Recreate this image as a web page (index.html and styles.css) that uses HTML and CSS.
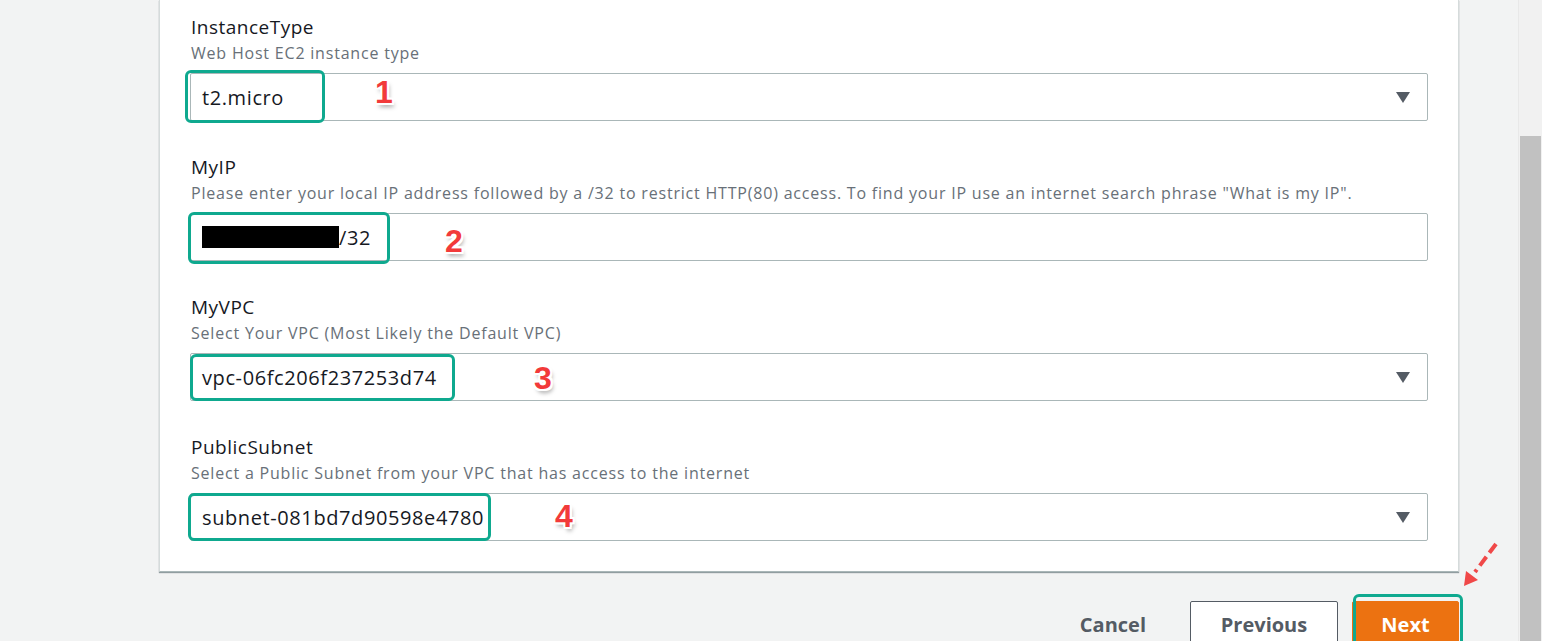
FILE: index.html
```html
<!DOCTYPE html>
<html>
<head>
<meta charset="utf-8">
<link rel="stylesheet" href="styles.css">
</head>
<body>
<div class="page">
  <div class="main">
    <div class="card">
      <div class="group">
        <div class="label">InstanceType</div>
        <div class="desc">Web Host EC2 instance type</div>
        <div class="field select">
          <span class="value">t2.micro</span>
          <span class="hl hl1"></span>
          <span class="num n1">1</span>
          <span class="caret"></span>
        </div>
      </div>
      <div class="group">
        <div class="label">MyIP</div>
        <div class="desc">Please enter your local IP address followed by a /32 to restrict HTTP(80) access. To find your IP use an internet search phrase "What is my IP".</div>
        <div class="field">
          <span class="value"><span class="redact"></span>/32</span>
          <span class="hl hl2"></span>
          <span class="num n2">2</span>
        </div>
      </div>
      <div class="group">
        <div class="label">MyVPC</div>
        <div class="desc">Select Your VPC (Most Likely the Default VPC)</div>
        <div class="field select">
          <span class="value">vpc-06fc206f237253d74</span>
          <span class="hl hl3"></span>
          <span class="num n3">3</span>
          <span class="caret"></span>
        </div>
      </div>
      <div class="group">
        <div class="label">PublicSubnet</div>
        <div class="desc">Select a Public Subnet from your VPC that has access to the internet</div>
        <div class="field select">
          <span class="value">subnet-081bd7d90598e4780</span>
          <span class="hl hl4"></span>
          <span class="num n4">4</span>
          <span class="caret"></span>
        </div>
      </div>
    </div>
    <div class="actions">
      <button class="btn link">Cancel</button>
      <button class="btn normal">Previous</button>
      <div class="next-wrap">
        <button class="btn primary">Next</button>
        <span class="hl hl5"></span>
        <svg class="arrow" width="50" height="60" viewBox="0 0 50 60">
          <line x1="38" y1="3" x2="17" y2="31" stroke="#f04848" stroke-width="4" stroke-dasharray="11 5" stroke-linecap="butt"/>
          <polygon points="6,45 8,30 20,39" fill="#f04848"/>
        </svg>
      </div>
    </div>
  </div>
  <div class="scrollbar"><div class="thumb"></div></div>
</div>
</body>
</html>
```
FILE: styles.css
```css
html, body {
  margin: 0;
  padding: 0;
}
body {
  background: #f2f3f3;
  font-family: "Open Sans", "Noto Sans", sans-serif;
  color: #16191f;
  overflow: hidden;
}
.page {
  display: flex;
  height: 641px;
  overflow: hidden;
}
.main {
  flex: 1;
  padding-left: 159px;
  padding-right: 59px;
}
.card {
  background: #fff;
  border-left: 1px solid #d5dbdb;
  border-right: 1px solid #d5dbdb;
  border-bottom: 1px solid #aab7b8;
  box-shadow: 0 1px 1px rgba(0, 28, 36, 0.4);
  padding: 13px 30px 30px 30px;
  display: flex;
  flex-direction: column;
  gap: 32px;
}
.group {
  display: flex;
  flex-direction: column;
}
.label {
  font-size: 19px;
  letter-spacing: 0.5px;
  line-height: 29px;
  color: #16191f;
  padding-left: 1px;
}
.desc {
  font-size: 16px;
  letter-spacing: 0.8px;
  line-height: 22px;
  color: #687078;
  padding-left: 1px;
  margin-bottom: 9px;
}
.field {
  position: relative;
  height: 46px;
  border: 1px solid #aab7b8;
  border-radius: 2px;
  display: flex;
  align-items: center;
  padding-left: 11px;
}
.value {
  font-size: 20px;
  letter-spacing: 0.6px;
  color: #16191f;
  display: flex;
  align-items: center;
}
.redact {
  display: inline-block;
  width: 137px;
  height: 22px;
  background: #000;
}
.caret {
  position: absolute;
  right: 17px;
  top: 18px;
  width: 0;
  height: 0;
  border-left: 7px solid transparent;
  border-right: 7px solid transparent;
  border-top: 11px solid #545b64;
}
.hl {
  position: absolute;
  border: 3px solid #0fa98f;
  border-radius: 6px;
  box-sizing: border-box;
  pointer-events: none;
}
.hl1 { left: -6px; top: -4px; width: 140px; height: 53px; }
.hl2 { left: -3px; top: -2px; width: 202px; height: 52px; }
.hl3 { left: -1px; top: 0px; width: 265px; height: 47px; }
.hl4 { left: -3px; top: -1px; width: 303px; height: 48px; }
.num {
  position: absolute;
  font-family: "Liberation Sans", Arial, sans-serif;
  font-size: 32px;
  font-weight: bold;
  color: #f23a3a;
  line-height: 1;
  text-shadow:
    -2px 0 0 #fff, 2px 0 0 #fff, 0 -2px 0 #fff, 0 2px 0 #fff,
    -2px -2px 0 #fff, 2px 2px 0 #fff, -2px 2px 0 #fff, 2px -2px 0 #fff,
    2px 4px 4px rgba(0, 0, 0, 0.35);
}
.n1 { left: 184px; top: 2px; }
.n2 { left: 254px; top: 11px; }
.n3 { left: 343px; top: 8px; }
.n4 { left: 364px; top: 6px; }
.actions {
  display: flex;
  justify-content: flex-end;
  align-items: flex-start;
  margin-top: 29px;
  gap: 14px;
}
.btn {
  font-family: "Open Sans", "Noto Sans", sans-serif;
  font-size: 20px;
  font-weight: bold;
  height: 46px;
  border-radius: 2px;
  cursor: pointer;
}
.btn.link {
  background: transparent;
  border: none;
  color: #545b64;
  padding: 0 22px;
  margin-right: 8px;
}
.btn.normal {
  background: #fff;
  border: 1px solid #545b64;
  color: #545b64;
  width: 148px;
}
.next-wrap {
  position: relative;
}
.btn.primary {
  background: #ec7211;
  border: 1px solid #ec7211;
  color: #fff;
  width: 107px;
}
.hl5 { left: 1px; top: -7px; width: 110px; height: 54px; }
.arrow {
  position: absolute;
  left: 106px;
  top: -60px;
}
.scrollbar {
  width: 24px;
  background: #f1f1f1;
  border-left: 1px solid #e8e8e8;
  box-sizing: border-box;
  position: relative;
}
.thumb {
  position: absolute;
  left: 1px;
  right: 1px;
  top: 136px;
  bottom: 0;
  background: #c1c1c1;
}
```
